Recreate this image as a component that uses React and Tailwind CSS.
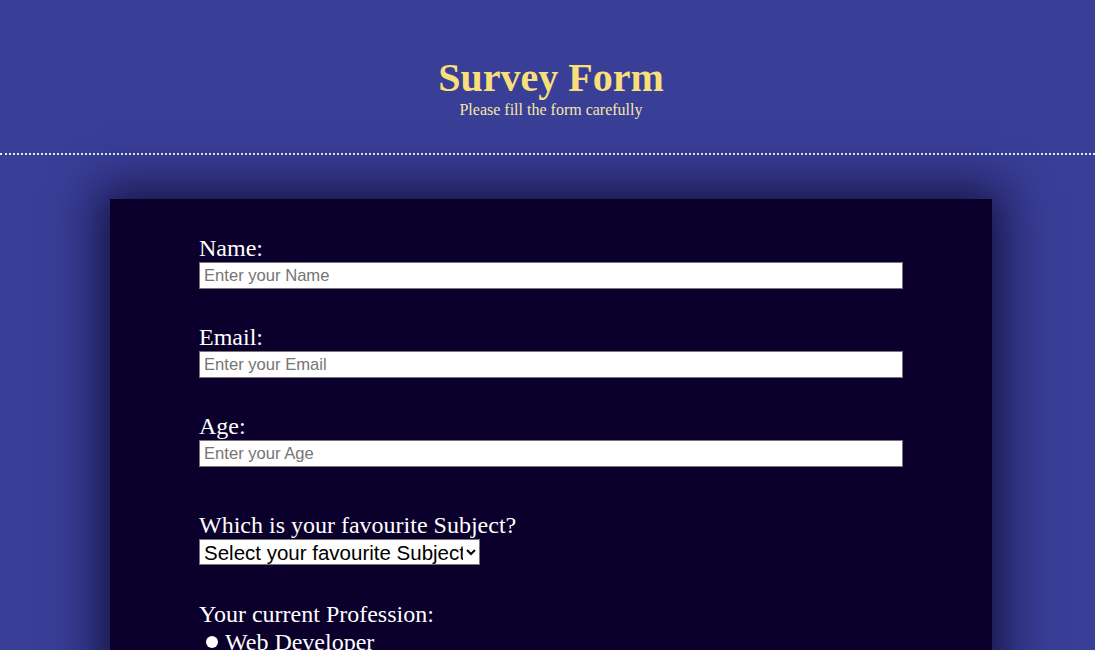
import React from "react";

const serif = { fontFamily: '"Liberation Serif", "Times New Roman", serif' };

function Field({ label, placeholder, className = "" }) {
  return (
    <div className={className}>
      <label className="block text-[24px] leading-[28px] text-white">{label}</label>
      <input
        type="text"
        placeholder={placeholder}
        className="block w-full h-[27px] bg-white border border-[#767676] px-[4px] text-[16.6px] text-black placeholder:text-[#757575] font-['Liberation_Sans',Arial,sans-serif]"
      />
    </div>
  );
}

export default function App() {
  return (
    <div className="min-h-screen bg-[#393e97] pl-[7px]" style={serif}>
      <header className="pt-[56px] text-center">
        <h1 className="text-[40px] leading-[44px] font-bold text-[#f8df7b]">Survey Form</h1>
        <p className="text-[16px] leading-[20px] text-[#f6e7a6]">Please fill the form carefully</p>
      </header>
      <div className="mt-[33px] -ml-[7px] border-t-2 border-dotted border-[#e8e8f0]" />

      <form className="mt-[44px] mx-auto w-[882px] bg-[#0a002b] px-[89px] pt-[35px] pb-[40px] shadow-[0_0_45px_12px_rgba(10,5,40,0.75)]">
        <Field label="Name:" placeholder="Enter your Name" />
        <Field label="Email:" placeholder="Enter your Email" className="mt-[34px]" />
        <Field label="Age:" placeholder="Enter your Age" className="mt-[34px]" />

        <div className="mt-[44px]">
          <label className="block text-[24px] leading-[28px] text-white">Which is your favourite Subject?</label>
          <select
            defaultValue=""
            className="block w-[281px] h-[26px] bg-white text-black border border-[#767676] text-[20.5px] font-['Liberation_Sans',Arial,sans-serif]"
          >
            <option value="" disabled>Select your favourite Subject</option>
            <option>Mathematics</option>
            <option>Science</option>
            <option>English</option>
          </select>
        </div>

        <div className="mt-[35px]">
          <label className="block text-[24px] leading-[28px] text-white">Your current Profession:</label>
          <div className="flex items-center gap-[7px] pl-[7px] text-[24px] leading-[28px] text-white">
            <span className="w-[12px] h-[12px] rounded-full bg-white" />
            <span>Web Developer</span>
          </div>
          <div className="flex items-center gap-[7px] pl-[7px] text-[24px] leading-[28px] text-white">
            <span className="w-[12px] h-[12px] rounded-full bg-white" />
            <span>Student</span>
          </div>
        </div>
      </form>
    </div>
  );
}
